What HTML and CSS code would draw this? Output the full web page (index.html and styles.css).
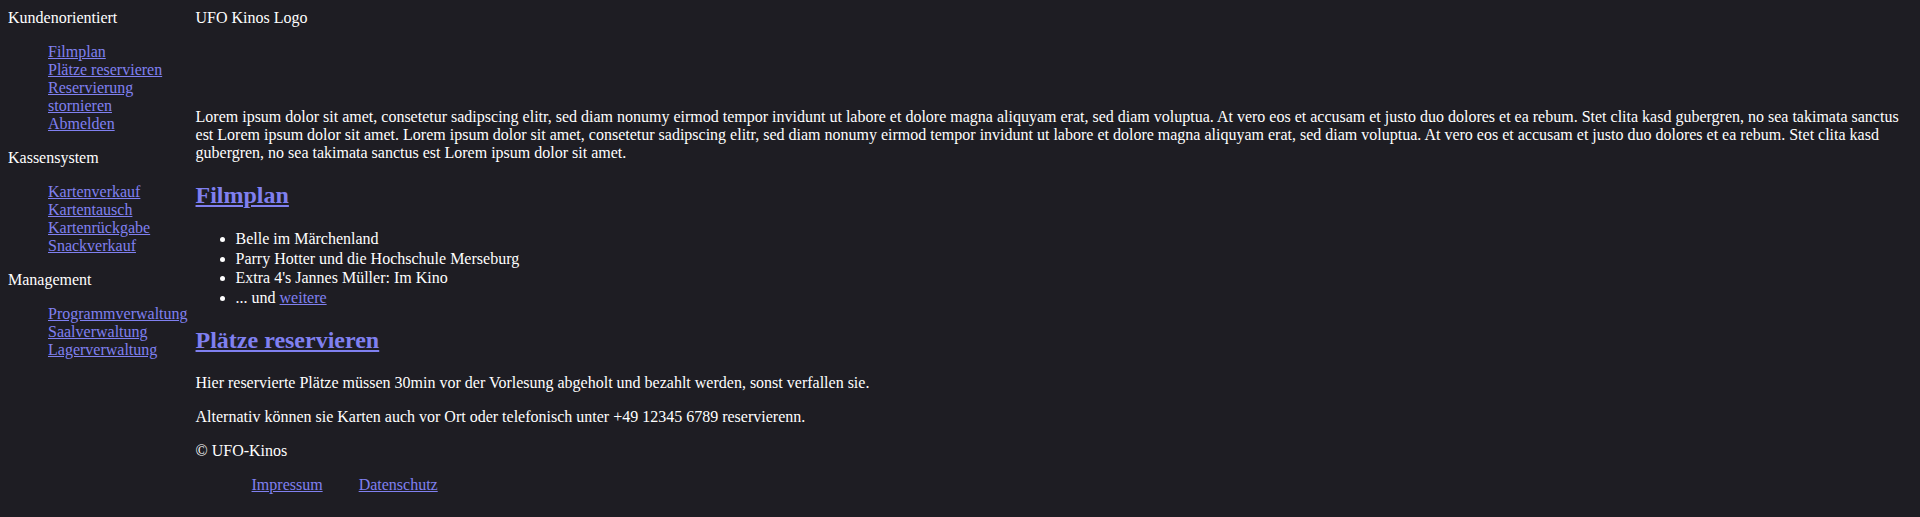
FILE: index.html
```html
<!DOCTYPE html>
<html lang="de">
<head>
<meta charset="utf-8">
<title>UFO Kinos</title>
<link rel="stylesheet" href="styles.css">
</head>
<body>
<div class="layout">
  <nav class="sidebar">
    <div class="group">
      <div class="group-title">Kundenorientiert</div>
      <ul class="nav-list">
        <li><a href="#filmplan">Filmplan</a></li>
        <li><a href="#plaetze">Plätze reservieren</a></li>
        <li><a href="#">Reservierung stornieren</a></li>
        <li><a href="#">Abmelden</a></li>
      </ul>
    </div>
    <div class="group">
      <div class="group-title">Kassensystem</div>
      <ul class="nav-list">
        <li><a href="#">Kartenverkauf</a></li>
        <li><a href="#">Kartentausch</a></li>
        <li><a href="#">Kartenrückgabe</a></li>
        <li><a href="#">Snackverkauf</a></li>
      </ul>
    </div>
    <div class="group">
      <div class="group-title">Management</div>
      <ul class="nav-list">
        <li><a href="#">Programmverwaltung</a></li>
        <li><a href="#">Saalverwaltung</a></li>
        <li><a href="#">Lagerverwaltung</a></li>
      </ul>
    </div>
  </nav>
  <main class="content">
    <header class="logo">UFO Kinos Logo</header>
    <p>Lorem ipsum dolor sit amet, consetetur sadipscing elitr, sed diam nonumy eirmod tempor invidunt ut labore et dolore magna aliquyam erat, sed diam voluptua. At vero eos et accusam et justo duo dolores et ea rebum. Stet clita kasd gubergren, no sea takimata sanctus est Lorem ipsum dolor sit amet. Lorem ipsum dolor sit amet, consetetur sadipscing elitr, sed diam nonumy eirmod tempor invidunt ut labore et dolore magna aliquyam erat, sed diam voluptua. At vero eos et accusam et justo duo dolores et ea rebum. Stet clita kasd gubergren, no sea takimata sanctus est Lorem ipsum dolor sit amet.</p>
    <h2 class="section-title" id="filmplan"><a href="#">Filmplan</a></h2>
    <ul class="film-list">
      <li>Belle im Märchenland</li>
      <li>Parry Hotter und die Hochschule Merseburg</li>
      <li>Extra 4's Jannes Müller: Im Kino</li>
      <li>... und <a href="#">weitere</a></li>
    </ul>
    <h2 class="section-title" id="plaetze"><a href="#">Plätze reservieren</a></h2>
    <p>Hier reservierte Plätze müssen 30min vor der Vorlesung abgeholt und bezahlt werden, sonst verfallen sie.</p>
    <p>Alternativ können sie Karten auch vor Ort oder telefonisch unter +49 12345 6789 reservierenn.</p>
    <footer class="footer">
      <p>© UFO-Kinos</p>
      <ul class="footer-links">
        <li><a href="#">Impressum</a></li>
        <li><a href="#">Datenschutz</a></li>
      </ul>
    </footer>
  </main>
</div>
</body>
</html>
```

FILE: styles.css
```css
html {
  background: #1e1d23;
}
body {
  margin: 9px 8px 8px;
  background: #1e1d23;
  color: #ffffff;
  font-family: "Liberation Serif", "Times New Roman", serif;
  font-size: 16px;
}
a {
  color: #8080f0;
}
.layout {
  display: flex;
  gap: 8px;
  align-items: flex-start;
}
.sidebar {
  flex: none;
  width: min-content;
}
.group-title {
  white-space: nowrap;
}
.nav-list {
  list-style: none;
  margin: 16px 0;
  padding-left: 40px;
}
.content {
  flex: 1;
  min-width: 0;
}
.logo {
  height: 83px;
}
.content p {
  margin: 16px 0;
}
.section-title {
  font-size: 24px;
  margin: 20px 0;
}
.film-list {
  margin: 16px 0;
  padding-left: 40px;
}
.film-list li {
  line-height: 19.5px;
}
.footer-links {
  list-style: none;
  margin: 16px 0;
  padding-left: 40px;
  display: flex;
  gap: 4px;
}
.footer-links li {
  padding: 0 16px;
}
```
